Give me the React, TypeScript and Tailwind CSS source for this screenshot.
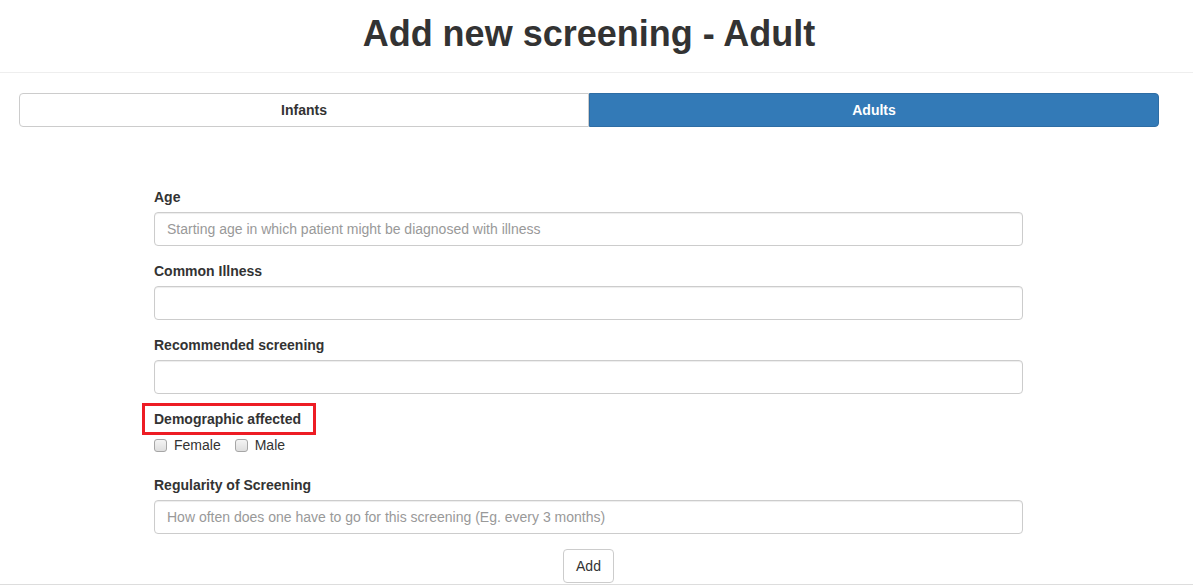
import { useState } from "react";

const FONT = { fontFamily: '"Liberation Sans", Arial, Helvetica, sans-serif' };

function Field({ label, placeholder }: { label: string; placeholder?: string }) {
  return (
    <div className="mb-[15px]">
      <label className="block text-[14px] leading-[20px] font-bold text-[#333] mb-[5px]">{label}</label>
      <input
        type="text"
        placeholder={placeholder}
        className="block w-full h-[34px] px-[12px] py-[6px] text-[14px] text-[#555] bg-white border border-[#ccc] rounded-[4px] shadow-[inset_0_1px_1px_rgba(0,0,0,0.075)] placeholder:text-[#999] outline-none"
      />
    </div>
  );
}

function Check({ label }: { label: string }) {
  return (
    <label className="flex items-center text-[14px] leading-[20px] text-[#333]">
      <input
        type="checkbox"
        className="appearance-none w-[13px] h-[13px] m-0 rounded-[3px] border border-[#a6a6a6] bg-gradient-to-b from-[#f4f4f4] to-[#dedede]"
      />
      <span className="ml-[7px]">{label}</span>
    </label>
  );
}

export default function App() {
  const [tab, setTab] = useState<"infants" | "adults">("adults");

  return (
    <div className="min-h-[586px] bg-white text-[#333]" style={FONT}>
      {/* Header */}
      <div className="border-b border-[#eee]">
        <div className="w-[1178px] pt-[14px] pb-[18px]">
          <h1 className="text-center text-[36px] leading-[40px] font-bold text-[#333] m-0">Add new screening - Adult</h1>
        </div>
      </div>

      <div className="w-[1178px] px-[19px] pt-[20px]">
        {/* Tabs */}
        <div className="flex h-[34px]">
          <button
            onClick={() => setTab("infants")}
            className={
              tab === "infants"
                ? "flex-1 rounded-l-[4px] bg-[#337ab7] border border-[#2e6da4] text-white text-[14px] font-bold"
                : "flex-1 rounded-l-[4px] bg-white border border-[#ccc] text-[#333] text-[14px] font-bold"
            }
          >
            Infants
          </button>
          <button
            onClick={() => setTab("adults")}
            className={
              tab === "adults"
                ? "flex-1 rounded-r-[4px] bg-[#337ab7] border border-[#2e6da4] text-white text-[14px] font-bold"
                : "flex-1 rounded-r-[4px] bg-white border border-[#ccc] text-[#333] text-[14px] font-bold"
            }
          >
            Adults
          </button>
        </div>

        {/* Form */}
        <form className="w-[869px] ml-[135px] pt-[60px]" onSubmit={e => e.preventDefault()}>
          <Field label="Age" placeholder="Starting age in which patient might be diagnosed with illness" />
          <Field label="Common Illness" />
          <Field label="Recommended screening" />

          <div className="mb-[20px]">
            <div className="mb-[6px] text-[14px] leading-[20px] h-[20px]">
              <span className="relative inline-block align-top font-bold text-[#333]">
                Demographic affected
                <span className="absolute left-[-12px] right-[-15px] top-[-6px] bottom-[-6px] border-[3px] border-[#ed1c24] pointer-events-none" />
              </span>
            </div>
            <div className="flex gap-[14px]">
              <Check label="Female" />
              <Check label="Male" />
            </div>
          </div>

          <Field label="Regularity of Screening" placeholder="How often does one have to go for this screening (Eg. every 3 months)" />

          <div className="flex justify-center">
            <button
              type="submit"
              className="h-[34px] px-[12px] text-[14px] text-[#333] bg-white border border-[#ccc] rounded-[4px]"
            >
              Add
            </button>
          </div>
        </form>
      </div>

      <div className="border-t border-[#ddd] mt-[1px]" />
    </div>
  );
}
